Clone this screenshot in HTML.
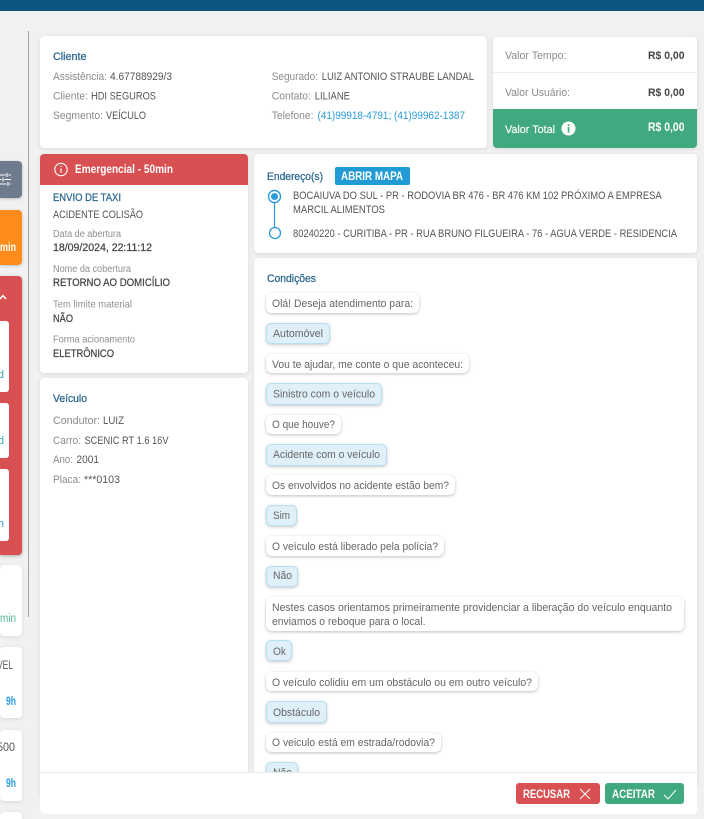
<!DOCTYPE html>
<html lang="pt"><head><meta charset="utf-8"><title>Atendimento</title>
<style>
html,body{margin:0;padding:0;width:704px;height:819px;overflow:hidden;background:#f1f1f1}
#p{position:relative;width:704px;height:819px;overflow:hidden}
.b{position:absolute;box-sizing:border-box}
.c{background:#fff;border-radius:4px;box-shadow:0 1px 4px rgba(0,0,0,.1)}
.q{position:absolute;left:266px;background:#fff;border-radius:6px;box-shadow:0 1px 3px rgba(0,0,0,.25)}
.a{position:absolute;left:266px;background:#dff0f9;border:1px solid #b7dff2;border-radius:5px;box-sizing:border-box;box-shadow:0 1px 3px rgba(0,0,0,.22)}
svg{position:absolute;left:0;top:0}
text{font-family:"Liberation Sans",sans-serif;font-size:11px}
.l{fill:#8b8b8b}.v{fill:#555}
.h{fill:#2f6a90;font-size:11px;stroke:#2f6a90;stroke-width:.3}
.s{fill:#8f8f8f;font-size:10px}.d{fill:#444;font-size:11px;stroke:#444;stroke-width:.25}
.t{fill:#666}.w{fill:#fff;font-weight:bold;font-size:11.5px}.k{fill:#444;font-weight:bold;font-size:11px}
</style></head><body><div id="p">
<div class="b" style="left:0;top:0;width:704px;height:11px;background:#0b5580"></div>
<div class="b" style="left:28px;top:31px;width:1px;height:586px;background:#a3a3a3"></div>

<div class="b" style="left:0;top:161px;width:22px;height:37px;background:#6d7b8d;border-radius:0 4px 4px 0;box-shadow:0 1px 3px rgba(0,0,0,.2)"></div>
<div class="b" style="left:0;top:210px;width:22px;height:55px;background:#ff8c1a;border-radius:0 4px 4px 0;box-shadow:0 1px 3px rgba(0,0,0,.2)"></div>
<div class="b" style="left:0;top:276px;width:22px;height:279px;background:#d95052;border-radius:0 4px 4px 0;box-shadow:0 1px 3px rgba(0,0,0,.3)"></div>
<div class="b" style="left:0;top:321px;width:9px;height:71px;background:#fff;border-radius:0 3px 3px 0"></div>
<div class="b" style="left:0;top:403px;width:9px;height:55px;background:#fff;border-radius:0 3px 3px 0"></div>
<div class="b" style="left:0;top:469px;width:9px;height:72px;background:#fff;border-radius:0 3px 3px 0"></div>
<div class="b c" style="left:0;top:565px;width:22px;height:71px"></div>
<div class="b c" style="left:0;top:647px;width:22px;height:71px"></div>
<div class="b c" style="left:0;top:730px;width:22px;height:71px"></div>
<div class="b c" style="left:0;top:812px;width:22px;height:7px;border-radius:4px 4px 0 0"></div>

<div class="b c" style="left:40px;top:36px;width:447px;height:112px"></div>
<div class="b c" style="left:493px;top:37px;width:204px;height:111px;overflow:hidden">
  <div class="b" style="left:0;top:35px;width:204px;height:1px;background:#eee"></div>
  <div class="b" style="left:0;top:72px;width:204px;height:39px;background:#41a97f"></div>
</div>
<div class="b c" style="left:40px;top:154px;width:208px;height:219px;overflow:hidden">
  <div class="b" style="left:0;top:0;width:208px;height:31px;background:#d95052"></div>
</div>
<div class="b c" style="left:40px;top:378px;width:208px;height:420px"></div>
<div class="b c" style="left:254px;top:154px;width:443px;height:99px"></div>
<div class="b c" style="left:254px;top:258px;width:443px;height:530px"></div>
<div class="b" style="left:335px;top:167px;width:75px;height:18px;background:#229ad6;border-radius:2px"></div>

<div class="q" style="top:293px;width:153px;height:20px"></div>
<div class="a" style="top:323px;width:64px;height:21px"></div>
<div class="q" style="top:354px;width:203px;height:19px"></div>
<div class="a" style="top:383px;width:116px;height:22px"></div>
<div class="q" style="top:415px;width:75px;height:19px"></div>
<div class="a" style="top:444px;width:121px;height:22px"></div>
<div class="q" style="top:475px;width:189px;height:20px"></div>
<div class="a" style="top:505px;width:31px;height:21px"></div>
<div class="q" style="top:536px;width:178px;height:20px"></div>
<div class="a" style="top:566px;width:32px;height:21px"></div>
<div class="q" style="top:597px;width:418px;height:34px"></div>
<div class="a" style="top:640px;width:26px;height:21px"></div>
<div class="q" style="top:672px;width:272px;height:19px"></div>
<div class="a" style="top:701px;width:61px;height:22px"></div>
<div class="q" style="top:733px;width:175px;height:19px"></div>
<div class="a" style="top:762px;width:32px;height:21px"></div>

<div class="b" style="left:40px;top:772px;width:657px;height:42px;background:#fff;border-top:1px solid #ececec;border-radius:0 0 4px 4px"></div>
<div class="b" style="left:516px;top:783px;width:84px;height:21px;background:#d95052;border-radius:3px"></div>
<div class="b" style="left:605px;top:783px;width:79px;height:21px;background:#41a97f;border-radius:3px"></div>

<svg width="704" height="819" viewBox="0 0 704 819" xmlns="http://www.w3.org/2000/svg">
<defs><clipPath id="cp"><rect x="0" y="0" width="704" height="772"/></clipPath></defs>
<g fill="none" stroke="#fff" stroke-width="1.1">
<path d="M0 175H5.500M8.500 175H11M7 173V177M0 179.500H1.500M4.500 179.500H11M3 177.500V181.500M0 184H6.500M9.500 184H11M8 182V186"/>
<path d="M0 299L3 295.500L6 299" stroke-width="1.5"/>
<circle cx="61" cy="169.500" r="6.200"/><path d="M61 168.500V173"/><path d="M61 165.800V167" stroke-width="1.3"/>
<path d="M580 789L590 799M590 789L580 799" stroke-width="1"/>
<path d="M664 795L668 799L676 790" stroke-width="1"/>
</g>
<g fill="none" stroke="#2a9bdb">
<circle cx="274.500" cy="196.500" r="6" stroke-width="1.4"/>
<path d="M274.500 202.500V228" stroke-width="1.2"/>
<circle cx="275" cy="233" r="5.500" stroke-width="1.3"/>
</g>
<circle cx="274.500" cy="196.500" r="3.500" fill="#2a9bdb"/>
<circle cx="568.500" cy="128.500" r="7" fill="#fff"/>
<rect x="567.700" y="127" width="1.700" height="5.500" fill="#41a97f"/>
<rect x="567.700" y="124.300" width="1.700" height="1.700" fill="#41a97f"/>

<text x="0" y="251" class="w" textLength="16" lengthAdjust="spacingAndGlyphs">min</text>
<text x="-2" y="378" style="fill:#3aa" textLength="6" lengthAdjust="spacingAndGlyphs">d</text>
<text x="-2" y="444" style="fill:#3aa" textLength="6" lengthAdjust="spacingAndGlyphs">d</text>
<text x="-2" y="527" style="fill:#2a9bdb" textLength="6" lengthAdjust="spacingAndGlyphs">h</text>
<text x="0" y="622" style="fill:#54b596;font-size:11.5px" textLength="16" lengthAdjust="spacingAndGlyphs">min</text>
<text x="-3" y="669" class="v" style="font-size:11.5px" textLength="16" lengthAdjust="spacingAndGlyphs">VEL</text>
<text x="6" y="705" style="fill:#2a9bdb;font-weight:bold;font-size:11.5px" textLength="10" lengthAdjust="spacingAndGlyphs">9h</text>
<text x="-3" y="751" class="v" style="font-size:11.5px" textLength="18" lengthAdjust="spacingAndGlyphs">500</text>
<text x="6" y="787" style="fill:#2a9bdb;font-weight:bold;font-size:11.5px" textLength="10" lengthAdjust="spacingAndGlyphs">9h</text>

<text x="53" y="60" class="h" textLength="33.500" lengthAdjust="spacingAndGlyphs">Cliente</text>
<text x="53" y="80" class="l" textLength="54" lengthAdjust="spacingAndGlyphs">Assistência:</text>
<text x="110" y="80" class="v" textLength="62" lengthAdjust="spacingAndGlyphs">4.67788929/3</text>
<text x="53" y="99.500" class="l" textLength="35" lengthAdjust="spacingAndGlyphs">Cliente:</text>
<text x="91" y="99.500" class="v" textLength="65" lengthAdjust="spacingAndGlyphs">HDI SEGUROS</text>
<text x="53" y="119" class="l" textLength="50" lengthAdjust="spacingAndGlyphs">Segmento:</text>
<text x="106" y="119" class="v" textLength="40" lengthAdjust="spacingAndGlyphs">VEÍCULO</text>
<text x="271.700" y="80" class="l" textLength="46.300" lengthAdjust="spacingAndGlyphs">Segurado:</text>
<text x="321.700" y="80" class="v" textLength="152.300" lengthAdjust="spacingAndGlyphs">LUIZ ANTONIO STRAUBE LANDAL</text>
<text x="271.700" y="99.500" class="l" textLength="39.300" lengthAdjust="spacingAndGlyphs">Contato:</text>
<text x="314.700" y="99.500" class="v" textLength="35.300" lengthAdjust="spacingAndGlyphs">LILIANE</text>
<text x="271.700" y="119" class="l" textLength="41.800" lengthAdjust="spacingAndGlyphs">Telefone:</text>
<text x="317.500" y="119" style="fill:#2a9bdb" textLength="147.500" lengthAdjust="spacingAndGlyphs">(41)99918-4791; (41)99962-1387</text>

<text x="505" y="59" class="l" textLength="61.500" lengthAdjust="spacingAndGlyphs">Valor Tempo:</text>
<text x="648" y="59" class="k" textLength="36.500" lengthAdjust="spacingAndGlyphs">R$ 0,00</text>
<text x="505" y="96" class="l" textLength="65" lengthAdjust="spacingAndGlyphs">Valor Usuário:</text>
<text x="648" y="96" class="k" textLength="36.500" lengthAdjust="spacingAndGlyphs">R$ 0,00</text>
<text x="505" y="133" style="fill:#fff;stroke:#fff;stroke-width:.15" textLength="50" lengthAdjust="spacingAndGlyphs">Valor Total</text>
<text x="648" y="131" class="w" textLength="36.500" lengthAdjust="spacingAndGlyphs">R$ 0,00</text>

<text x="75" y="173" class="w" textLength="98" lengthAdjust="spacingAndGlyphs">Emergencial - 50min</text>
<text x="53" y="201" class="h" textLength="68" lengthAdjust="spacingAndGlyphs">ENVIO DE TAXI</text>
<text x="53" y="218" class="v" textLength="90" lengthAdjust="spacingAndGlyphs">ACIDENTE COLISÃO</text>
<text x="53" y="237" class="s" textLength="68" lengthAdjust="spacingAndGlyphs">Data de abertura</text>
<text x="53" y="251" class="d" textLength="99" lengthAdjust="spacingAndGlyphs">18/09/2024, 22:11:12</text>
<text x="53" y="272" class="s" textLength="78" lengthAdjust="spacingAndGlyphs">Nome da cobertura</text>
<text x="53" y="286" class="d" textLength="117" lengthAdjust="spacingAndGlyphs">RETORNO AO DOMICÍLIO</text>
<text x="53" y="307.500" class="s" textLength="79" lengthAdjust="spacingAndGlyphs">Tem limite material</text>
<text x="53" y="322" class="d" textLength="20" lengthAdjust="spacingAndGlyphs">NÃO</text>
<text x="53" y="342.500" class="s" textLength="82" lengthAdjust="spacingAndGlyphs">Forma acionamento</text>
<text x="53" y="357" class="d" textLength="61" lengthAdjust="spacingAndGlyphs">ELETRÔNICO</text>

<text x="53" y="402" class="h" textLength="34" lengthAdjust="spacingAndGlyphs">Veículo</text>
<text x="53" y="424" class="l" textLength="47" lengthAdjust="spacingAndGlyphs">Condutor:</text>
<text x="103" y="424" class="v" textLength="21" lengthAdjust="spacingAndGlyphs">LUIZ</text>
<text x="53" y="444" class="l" textLength="28" lengthAdjust="spacingAndGlyphs">Carro:</text>
<text x="84.500" y="444" class="v" textLength="84" lengthAdjust="spacingAndGlyphs">SCENIC RT 1.6 16V</text>
<text x="53" y="463" class="l" textLength="20" lengthAdjust="spacingAndGlyphs">Ano:</text>
<text x="76.500" y="463" class="v" textLength="22.500" lengthAdjust="spacingAndGlyphs">2001</text>
<text x="53" y="483" class="l" textLength="28" lengthAdjust="spacingAndGlyphs">Placa:</text>
<text x="84" y="483" class="v" textLength="36" lengthAdjust="spacingAndGlyphs">***0103</text>

<text x="267" y="180" class="h" textLength="56" lengthAdjust="spacingAndGlyphs">Endereço(s)</text>
<text x="341" y="180" class="w" textLength="62" lengthAdjust="spacingAndGlyphs">ABRIR MAPA</text>
<text x="293" y="199" class="v" textLength="368.700" lengthAdjust="spacingAndGlyphs">BOCAIUVA DO SUL - PR - RODOVIA BR 476 - BR 476 KM 102 PRÓXIMO A EMPRESA</text>
<text x="293" y="213" class="v" textLength="92" lengthAdjust="spacingAndGlyphs">MARCIL ALIMENTOS</text>
<text x="293" y="237" class="v" textLength="384" lengthAdjust="spacingAndGlyphs">80240220 - CURITIBA - PR - RUA BRUNO FILGUEIRA - 76 - AGUA VERDE - RESIDENCIA</text>

<text x="267" y="282" class="h" textLength="49" lengthAdjust="spacingAndGlyphs">Condições</text>
<text x="272" y="307" class="t" textLength="141" lengthAdjust="spacingAndGlyphs">Olá! Deseja atendimento para:</text>
<text x="273" y="337" class="t" textLength="50" lengthAdjust="spacingAndGlyphs">Automóvel</text>
<text x="272" y="368" class="t" textLength="191" lengthAdjust="spacingAndGlyphs">Vou te ajudar, me conte o que aconteceu:</text>
<text x="273" y="397.500" class="t" textLength="102" lengthAdjust="spacingAndGlyphs">Sinistro com o veículo</text>
<text x="272" y="428" class="t" textLength="63" lengthAdjust="spacingAndGlyphs">O que houve?</text>
<text x="273" y="458" class="t" textLength="107" lengthAdjust="spacingAndGlyphs">Acidente com o veículo</text>
<text x="272" y="489" class="t" textLength="177" lengthAdjust="spacingAndGlyphs">Os envolvidos no acidente estão bem?</text>
<text x="273" y="519" class="t" textLength="17" lengthAdjust="spacingAndGlyphs">Sim</text>
<text x="272" y="550" class="t" textLength="166" lengthAdjust="spacingAndGlyphs">O veículo está liberado pela polícia?</text>
<text x="273" y="579" class="t" textLength="19" lengthAdjust="spacingAndGlyphs">Não</text>
<text x="272" y="611" class="t" textLength="400" lengthAdjust="spacingAndGlyphs">Nestes casos orientamos primeiramente providenciar a liberação do veículo enquanto</text>
<text x="272" y="625" class="t" textLength="153.500" lengthAdjust="spacingAndGlyphs">enviamos o reboque para o local.</text>
<text x="273" y="655" class="t" textLength="13" lengthAdjust="spacingAndGlyphs">Ok</text>
<text x="272" y="686" class="t" textLength="260" lengthAdjust="spacingAndGlyphs">O veículo colidiu em um obstáculo ou em outro veículo?</text>
<text x="273" y="716" class="t" textLength="47" lengthAdjust="spacingAndGlyphs">Obstáculo</text>
<text x="272" y="746" class="t" textLength="163" lengthAdjust="spacingAndGlyphs">O veiculo está em estrada/rodovia?</text>
<text x="273" y="776" class="t" clip-path="url(#cp)" textLength="19" lengthAdjust="spacingAndGlyphs">Não</text>

<text x="523" y="798" class="w" textLength="47" lengthAdjust="spacingAndGlyphs">RECUSAR</text>
<text x="612" y="798" class="w" textLength="43" lengthAdjust="spacingAndGlyphs">ACEITAR</text>
</svg>
</div></body></html>
